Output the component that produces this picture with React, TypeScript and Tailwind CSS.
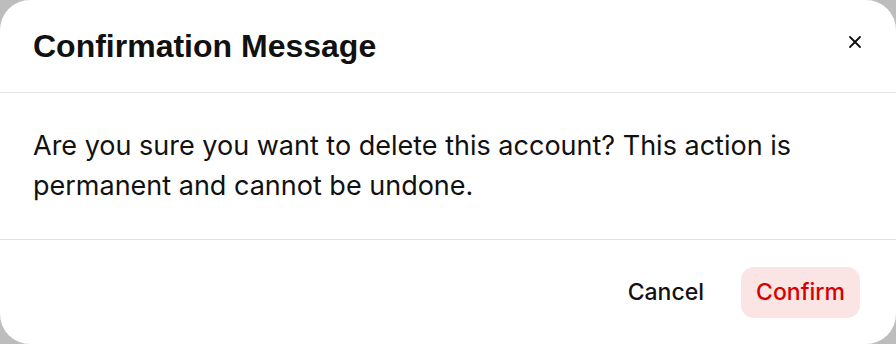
import { X } from 'lucide-react';

export default function App() {
  return (
    <div className="w-[896px] h-[344px] bg-[#bdbdbd] font-['Inter',sans-serif]">
      <div className="flex h-full w-full flex-col rounded-[30px] bg-white">
        {/* Header */}
        <div className="flex h-[93px] items-center justify-between border-b border-[#e2e2e2] pl-[33px] pr-[31px]">
          <h2 className="font-['Liberation_Sans',Arial,sans-serif] text-[32px] font-bold text-[#111]">
            Confirmation Message
          </h2>
          <button className="mb-[8px] flex h-5 w-5 items-center justify-center text-[#111]">
            <X className="h-5 w-5" strokeWidth={2.2} />
          </button>
        </div>

        {/* Body */}
        <div className="flex h-[146px] items-center px-[33px]">
          <p className="text-[27px] leading-[40px] text-[#111]">
            Are you sure you want to delete this account? This action is permanent and cannot be undone.
          </p>
        </div>

        {/* Footer */}
        <div className="flex flex-1 items-center justify-end gap-[37px] border-t border-[#e2e2e2] pr-[36px]">
          <button className="text-[23px] font-medium text-[#111]">Cancel</button>
          <button className="h-[51px] w-[119px] rounded-[13px] bg-[#fbe4e4] text-[23px] font-medium text-[#d60000]">
            Confirm
          </button>
        </div>
      </div>
    </div>
  );
}
